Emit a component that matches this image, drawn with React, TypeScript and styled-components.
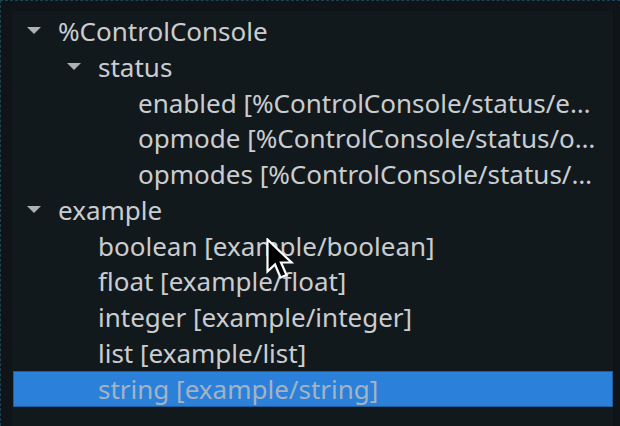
import React from 'react';
import styled, { createGlobalStyle } from 'styled-components';

type Node = {
  label: string;
  depth: number;
  open?: boolean;
  leaf?: boolean;
  selected?: boolean;
};

const nodes: Node[] = [
  { label: '%ControlConsole', depth: 0, open: true },
  { label: 'status', depth: 1, open: true },
  { label: 'enabled [%ControlConsole/status/enabled]', depth: 2, leaf: true },
  { label: 'opmode [%ControlConsole/status/opmode]', depth: 2, leaf: true },
  { label: 'opmodes [%ControlConsole/status/opmodes]', depth: 2, leaf: true },
  { label: 'example', depth: 0, open: true },
  { label: 'boolean [example/boolean]', depth: 1, leaf: true },
  { label: 'float [example/float]', depth: 1, leaf: true },
  { label: 'integer [example/integer]', depth: 1, leaf: true },
  { label: 'list [example/list]', depth: 1, leaf: true },
  { label: 'string [example/string]', depth: 1, leaf: true, selected: true },
];

const App = () => {
  return (
    <>
      <GlobalStyle />
      <Window>
        <TreePanel>
          {nodes.map((n) => (
            <Row key={n.label} $depth={n.depth} $selected={!!n.selected}>
              <Arrow>
                {!n.leaf && (
                  <svg width="14" height="7" viewBox="0 0 14 7">
                    <path d="M0 0 L14 0 L7 7 Z" fill="#aeb2b6" />
                  </svg>
                )}
              </Arrow>
              <Label $selected={!!n.selected}>{n.label}</Label>
            </Row>
          ))}
        </TreePanel>
        <Cursor width="28" height="42" viewBox="0 0 28 42">
          <path
            d="M1.5 1.5 L1.5 33.5 L9 26.5 L14.5 39.5 L20.5 37 L15 24.5 L25.5 24.5 Z"
            fill="#000"
            stroke="#fff"
            strokeWidth="2.2"
            strokeLinejoin="miter"
          />
        </Cursor>
      </Window>
    </>
  );
};

const GlobalStyle = createGlobalStyle`
  html, body {
    margin: 0;
    padding: 0;
    background: #0e1417;
  }
`;

const Window = styled.div`
  position: relative;
  width: 620px;
  height: 426px;
  box-sizing: border-box;
  background: #0e1417;
  border-top: 1px dashed #1d4254;
  border-left: 1px dashed #1d4254;
  padding: 10px 6px 0 11px;
  overflow: hidden;
  font-family: 'Noto Sans', 'Open Sans', sans-serif;
`;

const TreePanel = styled.div`
  background: #12191d;
  height: 100%;
  padding-top: 2px;
  box-sizing: border-box;
  border-right: 1px solid #0b1013;
`;

const Row = styled.div<{ $depth: number; $selected: boolean }>`
  display: flex;
  align-items: center;
  height: 35.8px;
  box-sizing: border-box;
  padding-left: ${(p) => 14 + p.$depth * 40}px;
  padding-right: 14px;
  background: ${(p) => (p.$selected ? '#2b80d9' : 'transparent')};
  border: 1px solid ${(p) => (p.$selected ? '#1f5c9c' : 'transparent')};
  margin: 0 0 0 1px;
`;

const Arrow = styled.span`
  flex: 0 0 14px;
  display: flex;
  align-items: center;
  margin-right: 17px;
  margin-left: -1px;
`;

const Label = styled.span<{ $selected: boolean }>`
  font-size: 26px;
  color: ${(p) => (p.$selected ? '#a3b3c4' : '#cacdd0')};
  white-space: nowrap;
  overflow: hidden;
  text-overflow: ellipsis;
  min-width: 0;
`;

const Cursor = styled.svg`
  position: absolute;
  left: 265px;
  top: 237px;
`;

export default App;
